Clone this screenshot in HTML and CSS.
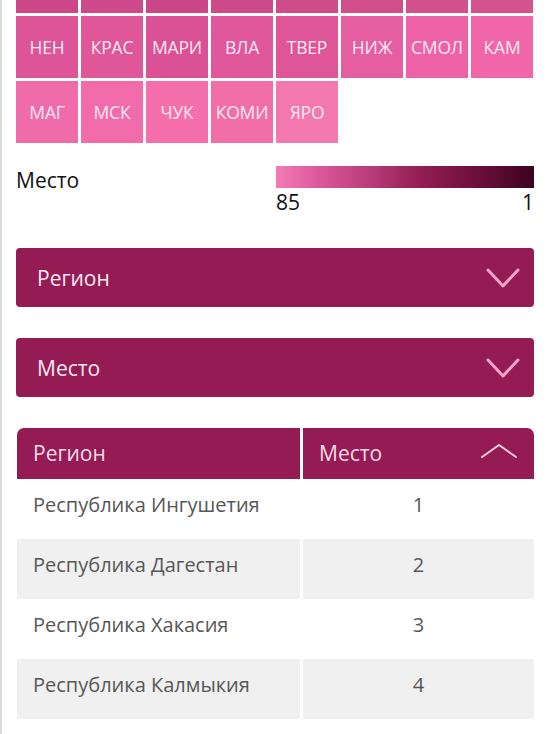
FILE: index.html
```html
<!DOCTYPE html>
<html lang="ru">
<head>
<meta charset="utf-8">
<title>Рейтинг регионов</title>
<link rel="stylesheet" href="styles.css">
</head>
<body>
<div class="page">
  <div class="tiles">
    <div class="tile" style="background:#cb4787"></div>
    <div class="tile" style="background:#cd4989"></div>
    <div class="tile" style="background:#ca4686"></div>
    <div class="tile" style="background:#cd4a8a"></div>
    <div class="tile" style="background:#cf4c8b"></div>
    <div class="tile" style="background:#d14e8d"></div>
    <div class="tile" style="background:#d3508f"></div>
    <div class="tile" style="background:#d55291"></div>

    <div class="tile" style="background:#dd5597">НЕН</div>
    <div class="tile" style="background:#df5699">КРАС</div>
    <div class="tile" style="background:#db5196">МАРИ</div>
    <div class="tile" style="background:#e0589b">ВЛА</div>
    <div class="tile" style="background:#de5598">ТВЕР</div>
    <div class="tile" style="background:#e65ea2">НИЖ</div>
    <div class="tile" style="background:#ed62a6">СМОЛ</div>
    <div class="tile" style="background:#f066a9">КАМ</div>

    <div class="tile" style="background:#f06ba9">МАГ</div>
    <div class="tile" style="background:#f26cab">МСК</div>
    <div class="tile" style="background:#f46fac">ЧУК</div>
    <div class="tile" style="background:#f26ea9">КОМИ</div>
    <div class="tile" style="background:#f478b0">ЯРО</div>
  </div>

  <div class="legend">
    <div class="legend-title">Место</div>
    <div class="legend-scale">
      <div class="legend-bar"></div>
      <div class="legend-labels"><span>85</span><span>1</span></div>
    </div>
  </div>

  <div class="select">
    <span>Регион</span>
    <svg class="chev" viewBox="0 0 34 22" width="34" height="22"><path d="M2 3 L17 19 L32 3" fill="none" stroke="#f2a6cb" stroke-width="3" stroke-linecap="round" stroke-linejoin="round"/></svg>
  </div>

  <div class="select">
    <span>Место</span>
    <svg class="chev" viewBox="0 0 34 22" width="34" height="22"><path d="M2 3 L17 19 L32 3" fill="none" stroke="#f2a6cb" stroke-width="3" stroke-linecap="round" stroke-linejoin="round"/></svg>
  </div>

  <div class="table">
    <div class="th th-left">Регион</div>
    <div class="th th-right">
      <span>Место</span>
      <svg class="sort" viewBox="0 0 38 16" width="38" height="16"><path d="M2 14 L19 2 L36 14" fill="none" stroke="#f3cfe0" stroke-width="2" stroke-linecap="round" stroke-linejoin="round"/></svg>
    </div>

    <div class="td">Республика Ингушетия</div>
    <div class="td num">1</div>

    <div class="td alt">Республика Дагестан</div>
    <div class="td num alt">2</div>

    <div class="td">Республика Хакасия</div>
    <div class="td num">3</div>

    <div class="td alt">Республика Калмыкия</div>
    <div class="td num alt">4</div>
  </div>
</div>
</body>
</html>
```

FILE: styles.css
```css
html, body {
  margin: 0;
  padding: 0;
  background: #ffffff;
  overflow: hidden;
}

body {
  font-family: "Open Sans", "Noto Sans", sans-serif;
  color: #1a1a1a;
}

.page {
  min-height: calc(100vh + 49px);
  border-left: 2px solid #dcdcdc;
  padding: 0 16px 0 14px;
  box-sizing: border-box;
}

/* tile map, first row scrolled partly out of view */
.tiles {
  display: grid;
  grid-template-columns: repeat(8, 62px);
  grid-auto-rows: 62px;
  gap: 3px;
  margin-top: -49px;
}

.tile {
  display: flex;
  align-items: center;
  justify-content: center;
  color: #fde8f1;
  font-size: 17.5px;
  letter-spacing: -0.2px;
}

/* colour legend */
.legend {
  display: flex;
  justify-content: space-between;
  margin-top: 23px;
}

.legend-title {
  font-size: 21px;
  line-height: 28px;
  color: #111;
}

.legend-scale {
  width: 258px;
}

.legend-bar {
  height: 22px;
  background: linear-gradient(to right, #f47bb8 0%, #db5a9c 16%, #b93d79 36%, #921d54 56%, #6b0f3b 78%, #3c0320 100%);
}

.legend-labels {
  display: flex;
  justify-content: space-between;
  font-size: 21px;
  line-height: 28px;
  color: #111;
}

/* dropdowns */
.select {
  height: 59px;
  margin-top: 32px;
  background: #941b53;
  border-radius: 4px;
  display: flex;
  align-items: center;
  justify-content: space-between;
  padding: 0 14px 0 21px;
  color: #fbeaf2;
  font-size: 21px;
}

.select + .select {
  margin-top: 31px;
}

.chev {
  display: block;
  margin-top: 1px;
}

/* ranking table */
.table {
  margin-top: 31px;
  display: grid;
  grid-template-columns: 283px 1fr;
  column-gap: 3px;
  grid-template-rows: 51px repeat(4, 60px);
  margin-left: 1px;
}

.th {
  background: #941b53;
  color: #f5dbe8;
  font-size: 21px;
  display: flex;
  align-items: center;
  padding-bottom: 1px;
}

.th-left {
  border-top-left-radius: 7px;
  padding-left: 16px;
}

.th-right {
  border-top-right-radius: 7px;
  padding: 0 16px 1px 16px;
  justify-content: space-between;
}

.sort {
  display: block;
  margin-top: -4px;
}

.td {
  display: flex;
  align-items: center;
  padding: 0 0 9px 16px;
  font-size: 20px;
  color: #575757;
  background: #ffffff;
}

.td.alt {
  background: #f0f0f0;
}

.td.num {
  justify-content: center;
  padding-left: 0;
}
```
